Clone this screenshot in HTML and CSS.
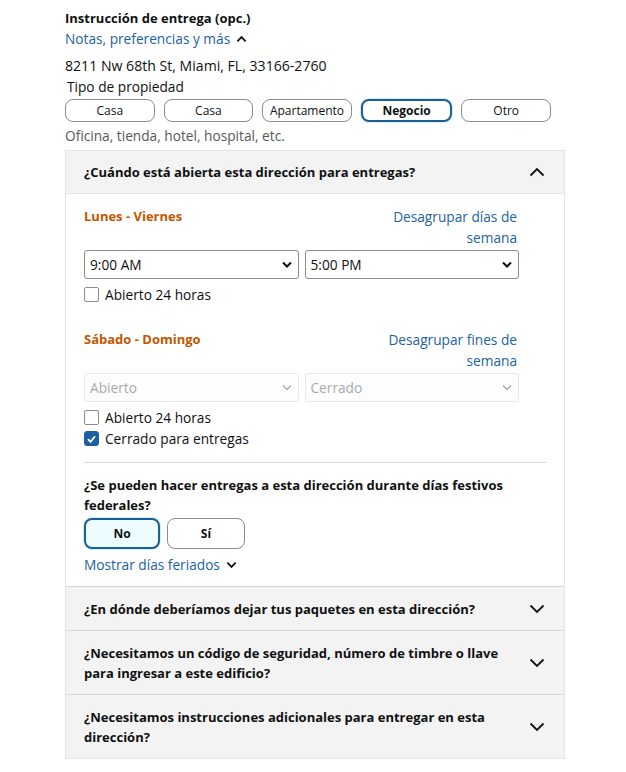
FILE: index.html
```html
<!DOCTYPE html>
<html lang="es">
<head>
<meta charset="utf-8">
<title>Instrucción de entrega</title>
<link rel="stylesheet" href="styles.css">
</head>
<body>
<main class="page">
  <h2 class="title">Instrucción de entrega (opc.)</h2>
  <a class="link toggle">Notas, preferencias y más
    <svg class="chev-sm" viewBox="0 0 12 8" width="11" height="8"><path d="M1.5 6.5 L6 2 L10.5 6.5" fill="none" stroke="#111" stroke-width="2"/></svg>
  </a>
  <p class="address">8211 Nw 68th St, Miami, FL, 33166-2760</p>
  <p class="label">Tipo de propiedad</p>
  <div class="types">
    <button class="type">Casa</button>
    <button class="type">Casa</button>
    <button class="type">Apartamento</button>
    <button class="type selected">Negocio</button>
    <button class="type">Otro</button>
  </div>
  <p class="hint">Oficina, tienda, hotel, hospital, etc.</p>

  <section class="accordion">
    <div class="acc-item open">
      <div class="acc-head">
        <span>¿Cuándo está abierta esta dirección para entregas?</span>
        <svg class="chev" viewBox="0 0 16 10" width="16" height="10"><path d="M1.5 8.5 L8 2 L14.5 8.5" fill="none" stroke="#111" stroke-width="1.8"/></svg>
      </div>
      <div class="acc-body">
        <div class="hours">
          <div class="days-row">
            <span class="days">Lunes - Viernes</span>
            <a class="link ungroup">Desagrupar días de<br>semana</a>
          </div>
          <div class="selects">
            <div class="select"><span>9:00 AM</span><svg viewBox="0 0 10 7" width="10" height="7"><path d="M1 1.5 L5 5.5 L9 1.5" fill="none" stroke="#111" stroke-width="2"/></svg></div>
            <div class="select"><span>5:00 PM</span><svg viewBox="0 0 10 7" width="10" height="7"><path d="M1 1.5 L5 5.5 L9 1.5" fill="none" stroke="#111" stroke-width="2"/></svg></div>
          </div>
          <label class="check"><span class="box"></span>Abierto 24 horas</label>

          <div class="days-row weekend">
            <span class="days">Sábado - Domingo</span>
            <a class="link ungroup">Desagrupar fines de<br>semana</a>
          </div>
          <div class="selects">
            <div class="select disabled"><span>Abierto</span><svg viewBox="0 0 10 7" width="10" height="7"><path d="M1 1.5 L5 5.5 L9 1.5" fill="none" stroke="#aaa" stroke-width="1.4"/></svg></div>
            <div class="select disabled"><span>Cerrado</span><svg viewBox="0 0 10 7" width="10" height="7"><path d="M1 1.5 L5 5.5 L9 1.5" fill="none" stroke="#aaa" stroke-width="1.4"/></svg></div>
          </div>
          <label class="check"><span class="box"></span>Abierto 24 horas</label>
          <label class="check"><span class="box checked"><svg viewBox="0 0 14 14" width="14" height="14"><path d="M3.2 7.2 L6 10 L10.8 4" fill="none" stroke="#fff" stroke-width="2"/></svg></span>Cerrado para entregas</label>
        </div>
        <hr class="divider">
        <p class="question">¿Se pueden hacer entregas a esta dirección durante días festivos federales?</p>
        <div class="yesno">
          <button class="yn active">No</button>
          <button class="yn">Sí</button>
        </div>
        <a class="link show-holidays">Mostrar días feriados
          <svg viewBox="0 0 12 8" width="11" height="8"><path d="M1.5 1.5 L6 6 L10.5 1.5" fill="none" stroke="#111" stroke-width="2"/></svg>
        </a>
      </div>
    </div>
    <div class="acc-item">
      <div class="acc-head">
        <span>¿En dónde deberíamos dejar tus paquetes en esta dirección?</span>
        <svg class="chev" viewBox="0 0 16 10" width="16" height="10"><path d="M1.5 1.5 L8 8 L14.5 1.5" fill="none" stroke="#111" stroke-width="1.8"/></svg>
      </div>
    </div>
    <div class="acc-item">
      <div class="acc-head">
        <span>¿Necesitamos un código de seguridad, número de timbre o llave para ingresar a este edificio?</span>
        <svg class="chev" viewBox="0 0 16 10" width="16" height="10"><path d="M1.5 1.5 L8 8 L14.5 1.5" fill="none" stroke="#111" stroke-width="1.8"/></svg>
      </div>
    </div>
    <div class="acc-item">
      <div class="acc-head">
        <span>¿Necesitamos instrucciones adicionales para entregar en esta dirección?</span>
        <svg class="chev" viewBox="0 0 16 10" width="16" height="10"><path d="M1.5 1.5 L8 8 L14.5 1.5" fill="none" stroke="#111" stroke-width="1.8"/></svg>
      </div>
    </div>
  </section>
</main>
</body>
</html>
```

FILE: styles.css
```css
* { box-sizing: border-box; }
html, body { margin: 0; padding: 0; background: #fff; }
body {
  font-family: "Open Sans", "Noto Sans", "Liberation Sans", sans-serif;
  font-size: 13.7px;
  line-height: 20px;
  color: #0f1111;
}
p { margin: 0; }
.page {
  width: 500px;
  margin-left: 65px;
  padding-top: 8px;
}
.title {
  font-size: 13px;
  font-weight: 700;
  margin: 0;
  line-height: 20px;
}
.link {
  color: #2162a1;
  text-decoration: none;
}
.toggle {
  display: flex;
  align-items: center;
  gap: 6px;
  margin-top: 1px;
}
.address { margin-top: 7px; font-size: 14.1px; }
.label { margin-left: 2px; margin-top: 1px; }
.types {
  display: flex;
  gap: 9px;
  margin-top: 2px;
  width: 486px;
}
.type {
  flex: 1;
  height: 23px;
  border: 1px solid #888c8c;
  border-radius: 8px;
  background: #fff;
  font-family: inherit;
  font-size: 12px;
  color: #0f1111;
  padding: 0;
}
.type.selected {
  border: 2px solid #1f5d95;
  font-weight: 700;
  box-shadow: 0 0 0 1px #c8f3fa;
}
.hint {
  color: #565959;
  margin-top: 4px;
}
.accordion {
  margin-top: 4px;
  border: 1px solid #e3e6e6;
}
.acc-item + .acc-item { border-top: 1px solid #d5d9d9; }
.acc-head {
  background: #f3f3f3;
  display: flex;
  align-items: center;
  justify-content: space-between;
  gap: 20px;
  padding: 12px 18px 11px 18px;
  min-height: 42px;
  font-size: 13px;
  font-weight: 700;
}
.open .acc-head { min-height: 42px; padding: 11px 18px; }
.acc-head span { max-width: 430px; }
.chev { flex: none; margin-right: 1px; }
.open .acc-head { border-bottom: 1px solid #e3e6e6; }
.acc-body {
  padding: 12px 18px 11px 18px;
}
.hours { width: 435px; }
.days-row {
  display: flex;
  justify-content: space-between;
  align-items: flex-start;
  line-height: 21px;
}
.days {
  color: #c45500;
  font-size: 13px;
  font-weight: 700;
}
.ungroup { text-align: right; padding-right: 2px; }
.weekend { margin-top: 24px; }
.selects {
  display: flex;
  gap: 6px;
  margin-top: 2px;
}
.select {
  flex: 1;
  height: 29px;
  border: 1px solid #888c8c;
  border-radius: 3px;
  display: flex;
  align-items: center;
  justify-content: space-between;
  padding: 0 6px 0 5px;
  background: #fff;
}
.select.disabled {
  border-color: #e7e9ec;
  color: #aaaaaa;
  background: #fdfdfd;
}
.check {
  display: flex;
  align-items: center;
  gap: 6px;
  line-height: 21px;
}
.selects + .check { margin-top: 5px; }
.box {
  width: 15px;
  height: 15px;
  border: 1px solid #888c8c;
  border-radius: 2px;
  background: #fff;
  display: inline-flex;
  align-items: center;
  justify-content: center;
}
.box.checked {
  background: #1d5fa3;
  border-color: #1d5fa3;
  border-radius: 3px;
}
.divider {
  border: 0;
  border-top: 1px solid #d5d9d9;
  margin: 13px 0 12px 0;
}
.question {
  font-size: 13px;
  font-weight: 700;
  line-height: 20px;
}
.yesno {
  display: flex;
  gap: 7px;
  margin-top: 3px;
}
.yn {
  width: 78px;
  height: 31px;
  border: 1px solid #888c8c;
  border-radius: 8px;
  background: #fff;
  font-family: inherit;
  font-size: 12px;
  font-weight: 700;
  color: #0f1111;
  padding: 0;
}
.yn.active {
  border: 2px solid #1f5d95;
  background: #edfdff;
  box-shadow: 0 0 0 1px #c8f3fa;
  width: 76px;
}
.show-holidays {
  display: flex;
  align-items: center;
  gap: 6px;
  margin-top: 6px;
}
```
